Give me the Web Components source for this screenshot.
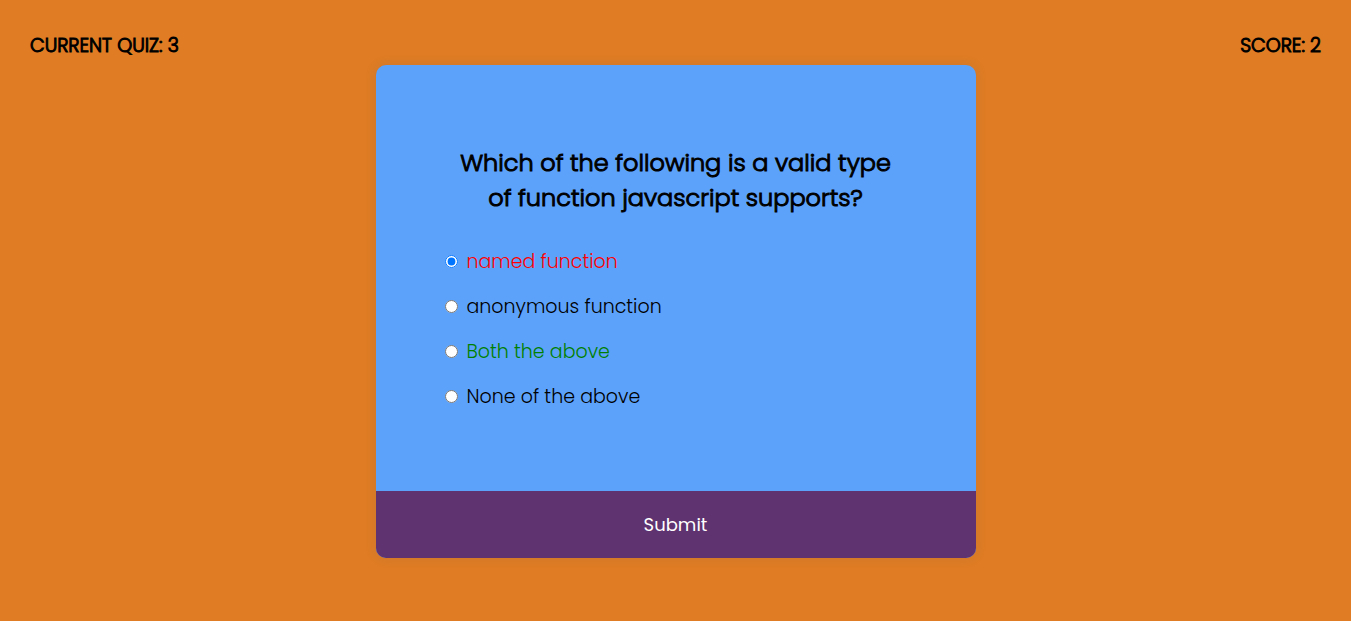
<!DOCTYPE html>
<html lang="en">
<head>
<meta charset="utf-8">
<meta name="viewport" content="width=device-width, initial-scale=1">
<title>Quiz</title>
<style>
body { margin: 0; min-height: 100vh; background: #df7c24; color: #000; font-family: Poppins, Inter, "Open Sans", sans-serif; }
</style>
</head>
<body>
<quiz-app></quiz-app>

<template id="app-template">
<style>
:host { display: block; }
main { padding: 0 16px 32px; }
</style>
<quiz-status><span slot="quiz">CURRENT QUIZ: 3</span><span slot="score">SCORE: 2</span></quiz-status>
<main>
<quiz-card>
<span slot="question">Which of the following is a valid type of function javascript supports?</span>
</quiz-card>
</main>
</template>

<template id="status-template">
<style>
:host { display: flex; justify-content: space-between; padding: 31px 30px 4px; font-size: 19px; line-height: 30px; font-weight: 300; -webkit-text-stroke: 1px currentColor; }
</style>
<slot name="quiz"></slot>
<slot name="score"></slot>
</template>

<template id="card-template">
<style>
:host { display: block; max-width: 600px; margin: 0 auto; border-radius: 10px; overflow: hidden; background: #5da2fa; box-shadow: 0 0 10px 2px rgba(100, 100, 100, 0.1); }
.body { padding: 64px; }
h2 { margin: 0; padding: 16px; text-align: center; font-size: 24px; line-height: 35px; font-weight: 300; -webkit-text-stroke: 1px currentColor; }
fieldset { margin: 0; padding: 8px 0; border: 0; min-width: 0; }
button { display: block; width: 100%; padding: 21px; border: 0; background: #5f3370; color: #fff; font-family: inherit; font-size: 18px; line-height: 25px; cursor: pointer; }
</style>
<form>
<div class="body">
<h2 id="question"><slot name="question"></slot></h2>
<fieldset aria-labelledby="question"></fieldset>
</div>
<button type="submit">Submit</button>
</form>
</template>

<template id="option-template">
<style>
:host { display: flex; align-items: center; padding: 10px 0; font-size: 19px; line-height: 25px; font-weight: 300; }
:host([state="wrong"]) { color: red; }
:host([state="right"]) { color: green; }
input { flex: none; width: 13px; height: 13px; margin: 0 9px 0 5px; }
</style>
<input type="radio" id="choice"><label for="choice"><slot></slot></label>
</template>

<script>
function stamp(element, id) {
  const root = element.attachShadow({ mode: "open" });
  root.append(document.getElementById(id).content.cloneNode(true));
  return root;
}

class QuizOption extends HTMLElement {
  constructor() {
    super();
    this.input = stamp(this, "option-template").querySelector("input");
    this.input.addEventListener("change", () => {
      this.dispatchEvent(new CustomEvent("choose", { bubbles: true }));
    });
  }
  connectedCallback() {
    this.input.checked = this.hasAttribute("checked");
  }
}

class QuizCard extends HTMLElement {
  constructor() {
    super();
    const root = stamp(this, "card-template");
    const list = root.querySelector("fieldset");
    list.innerHTML = `
      <quiz-option state="wrong" checked>named function</quiz-option>
      <quiz-option>anonymous function</quiz-option>
      <quiz-option state="right">Both the above</quiz-option>
      <quiz-option>None of the above</quiz-option>`;
    list.addEventListener("choose", (event) => {
      for (const option of list.children) option.input.checked = option === event.target;
    });
    root.querySelector("form").addEventListener("submit", (event) => event.preventDefault());
  }
}

class QuizStatus extends HTMLElement {
  constructor() {
    super();
    stamp(this, "status-template");
  }
}

class QuizApp extends HTMLElement {
  constructor() {
    super();
    stamp(this, "app-template");
  }
}

customElements.define("quiz-option", QuizOption);
customElements.define("quiz-card", QuizCard);
customElements.define("quiz-status", QuizStatus);
customElements.define("quiz-app", QuizApp);
</script>
</body>
</html>
